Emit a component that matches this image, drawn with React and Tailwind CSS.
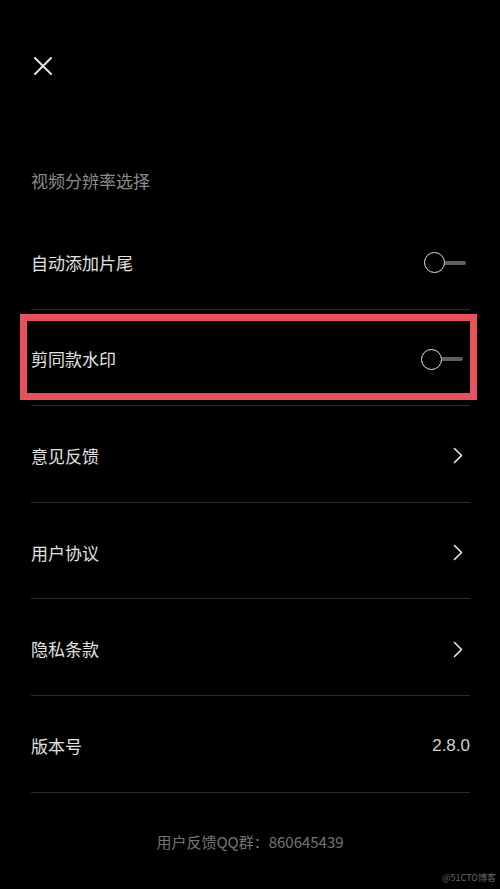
import React from 'react';

function Toggle({ shift }) {
    // switch in off state: hollow knob + grey track
    return (
        <div className={`flex items-center ${shift}`}>
            <div className="w-[21px] h-[21px] rounded-full border-[1.5px] border-[#e6e6e6] shrink-0"></div>
            <div className="w-[21px] h-[4px] bg-[#5f5f5f] rounded-r-full"></div>
        </div>
    );
}

function Chevron() {
    return (
        <svg className="mr-[7px]" width="10" height="17" viewBox="0 0 10 17" fill="none">
            <path d="M1.5 1.5L8.5 8.5L1.5 15.5" stroke="#e6e6e6" strokeWidth="1.6" strokeLinecap="round" strokeLinejoin="round" />
        </svg>
    );
}

function Row({ label, right, highlight }) {
    return (
        <div className="relative h-[96.6px] pt-[4px] border-b border-[#2c2c2c] flex items-center justify-between">
            <span className="text-[17px] leading-[24px] text-[#e2e2e2]">{label}</span>
            {right}
            {highlight && (
                <div className="absolute left-[-11px] right-[-7px] top-[4px] bottom-[5px] border-[7px] border-[#e8525e] pointer-events-none"></div>
            )}
        </div>
    );
}

export default function App() {
    return (
        <div className="relative min-h-[889px] w-full bg-black font-['Noto_Sans_CJK_SC','Noto_Sans',sans-serif] overflow-hidden">

            {/* close button */}
            <div className="pt-[57px] pl-[34px]">
                <svg width="18" height="18" viewBox="0 0 18 18" fill="none">
                    <path d="M1 1L17 17M17 1L1 17" stroke="#e2e2e2" strokeWidth="2" strokeLinecap="round" />
                </svg>
            </div>

            <div className="pl-[31px] pr-[30px]">
                <div className="mt-[94px] text-[17px] leading-[24px] text-[#8a8a8a]">视频分辨率选择</div>

                <div className="mt-[20px]">
                    <Row label="自动添加片尾" right={<Toggle shift="mr-[4px]" />} />
                    <Row label="剪同款水印" right={<Toggle shift="mr-[7px]" />} highlight />
                    <Row label="意见反馈" right={<Chevron />} />
                    <Row label="用户协议" right={<Chevron />} />
                    <Row label="隐私条款" right={<Chevron />} />
                    <Row label="版本号" right={<span className="text-[17px] leading-[24px] text-[#d0d0d0] font-['Liberation_Sans',sans-serif]">2.8.0</span>} />
                </div>
            </div>

            <div className="mt-[39px] text-center text-[15px] leading-[20px] text-[#757575]">
                用户反馈QQ群：860645439
            </div>

            <div className="absolute right-[4px] bottom-[6px] text-[9px] leading-[10px] text-[#6a6a6a]">@51CTO博客</div>
        </div>
    );
}
